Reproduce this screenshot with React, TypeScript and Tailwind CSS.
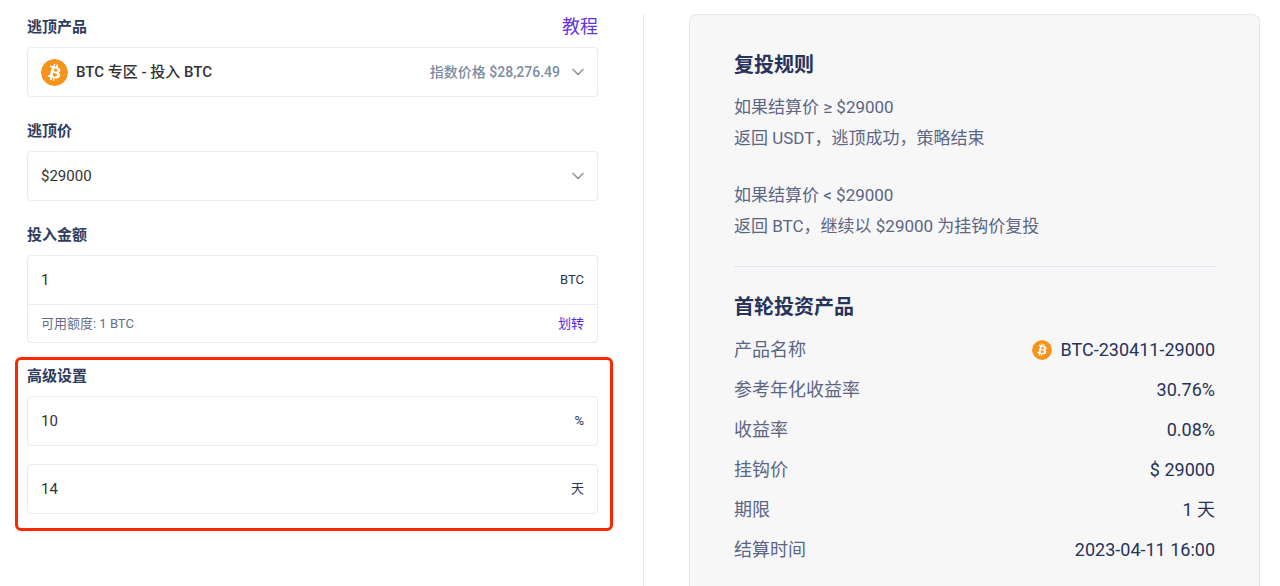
import { useState } from 'react'
import { SiBitcoin } from 'react-icons/si'

const PRODUCT_ROWS = [
  { label: '产品名称', value: 'BTC-230411-29000', coin: true },
  { label: '参考年化收益率', value: '30.76%' },
  { label: '收益率', value: '0.08%' },
  { label: '挂钩价', value: '$ 29000' },
  { label: '期限', value: '1 天' },
  { label: '结算时间', value: '2023-04-11 16:00' },
]

const LABEL = 'block text-[15px] leading-6 font-semibold text-[#2f3c60]'
const BOX = 'rounded-[4px] border border-[#e8ebee] bg-white'
const CONTROL = 'min-w-0 flex-1 appearance-none bg-transparent text-[15px] text-[#333333] outline-none'

function Chevron() {
  return (
    <svg aria-hidden="true" className="pointer-events-none h-3 w-3 shrink-0" fill="none" viewBox="0 0 12 12">
      <path d="M1 3.5 6 8.5 11 3.5" stroke="#8c8c8c" strokeLinecap="round" strokeLinejoin="round" strokeWidth="1.4" />
    </svg>
  )
}

interface NumberFieldProps {
  id: string
  label: string
  unit: string
  value: string
  onChange: (value: string) => void
}

function NumberField({ id, label, unit, value, onChange }: NumberFieldProps) {
  return (
    <div className="flex h-12 items-center px-[13px]">
      <input
        aria-label={label}
        className={CONTROL}
        id={id}
        inputMode="numeric"
        onChange={(e) => onChange(e.target.value)}
        type="text"
        value={value}
      />
      <label className="text-[13px] text-[#26335a]" htmlFor={id}>
        {unit}
      </label>
    </div>
  )
}

export default function App() {
  const [amount, setAmount] = useState('1')
  const [percent, setPercent] = useState('10')
  const [days, setDays] = useState('14')

  return (
    <main className="grid min-h-screen grid-cols-[1fr_1px_1fr] gap-x-[45px] bg-white pt-[14px] pr-5 pl-[27px] font-[Roboto,'Noto_Sans_CJK_SC',sans-serif]">
      <form className="pt-px">
        <div className="mb-[22px]">
          <div className="mb-2 flex items-center justify-between">
            <label className={LABEL} htmlFor="product">
              逃顶产品
            </label>
            <a className="text-[18px] leading-6 text-[#6236e0]" href="#tutorial">
              教程
            </a>
          </div>
          <div className={`${BOX} flex h-[50px] items-center px-[13px]`}>
            <SiBitcoin className="mr-2 size-[27px] shrink-0 rounded-full bg-white text-[#f7931a]" />
            <select className={`${CONTROL} font-medium`} id="product">
              <option>BTC 专区 - 投入 BTC</option>
            </select>
            <span className="mr-3 text-[14px] font-medium text-[#7b8ca3]">指数价格 $28,276.49</span>
            <Chevron />
          </div>
        </div>

        <div className="mb-[22px]">
          <label className={`${LABEL} mb-2`} htmlFor="price">
            逃顶价
          </label>
          <div className={`${BOX} flex h-[50px] items-center px-[13px]`}>
            <select className={CONTROL} id="price">
              <option>$29000</option>
            </select>
            <Chevron />
          </div>
        </div>

        <div className="mb-[14px]">
          <label className={`${LABEL} mb-2`} htmlFor="amount">
            投入金额
          </label>
          <div className={BOX}>
            <NumberField id="amount" label="投入金额" onChange={setAmount} unit="BTC" value={amount} />
            <div className="flex h-[38px] items-center justify-between border-t border-[#e8ebee] px-[13px] text-[13px]">
              <span className="text-[#636d8c]">可用额度: 1 BTC</span>
              <button className="text-[#4f2be0]" type="button">
                划转
              </button>
            </div>
          </div>
        </div>

        {/* Advanced settings, outlined in red */}
        <fieldset className="-mr-[15px] -ml-3 rounded-[6px] border-3 border-[#ff2600] pt-1 pr-3 pb-[14px] pl-[9px]">
          <div className={`${LABEL} mb-2`}>高级设置</div>
          <div className={`${BOX} mb-[18px]`}>
            <NumberField id="percent" label="百分比" onChange={setPercent} unit="%" value={percent} />
          </div>
          <div className={BOX}>
            <NumberField id="days" label="天数" onChange={setDays} unit="天" value={days} />
          </div>
        </fieldset>
      </form>

      <div className="bg-[#e4e7f0]" />

      <aside className="rounded-t-[8px] border border-b-0 border-[#e3e6ec] bg-[#f7f7f7] px-11 pt-[35px] text-[#5b6584]">
        <h2 className="mb-3 text-[20px] leading-[30px] font-semibold text-[#26335a]">复投规则</h2>
        <div className="space-y-[26px] text-[17px] leading-[31px]">
          <p>
            如果结算价 ≥ $29000
            <br />
            返回 USDT，逃顶成功，策略结束
          </p>
          <p>
            如果结算价 &lt; $29000
            <br />
            返回 BTC，继续以 $29000 为挂钩价复投
          </p>
        </div>

        <hr className="mt-6 mb-[25px] border-[#dfe5f3]" />

        <h2 className="mb-4 text-[20px] leading-[30px] font-semibold text-[#26335a]">首轮投资产品</h2>
        <dl className="space-y-4 leading-6">
          {PRODUCT_ROWS.map((row) => (
            <div className="flex items-center justify-between" key={row.label}>
              <dt className="text-[18px]">{row.label}</dt>
              <dd className="flex items-center gap-[9px] text-[18px] text-[#26335a]">
                {row.coin && <SiBitcoin className="size-5 rounded-full bg-white text-[#f7931a]" />}
                {row.value}
              </dd>
            </div>
          ))}
        </dl>
      </aside>
    </main>
  )
}
